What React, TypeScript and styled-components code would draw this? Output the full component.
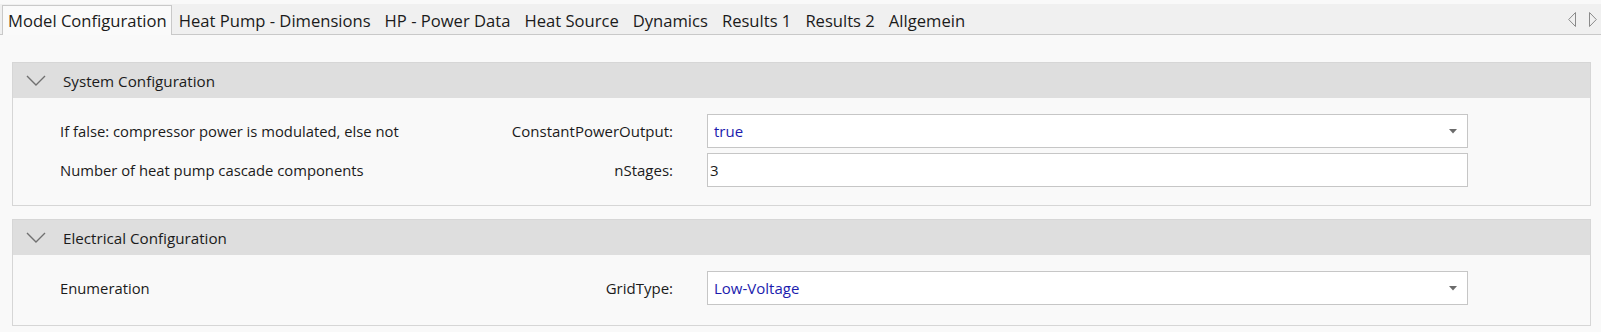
import React from "react";
import styled, { createGlobalStyle } from "styled-components";

const Global = createGlobalStyle`
  html, body { margin: 0; padding: 0; background: #f9f9f9; }
  body { font-family: "Open Sans", "Noto Sans", "Liberation Sans", sans-serif; color: #1b1b1b; }
  * { box-sizing: border-box; }
`;

const Page = styled.div`
  width: 1601px;
  height: 332px;
  padding-top: 4px;
  background: #f9f9f9;
  overflow: hidden;
`;

const TabStrip = styled.div`
  height: 31px;
  background: #f0f0f0;
  border-bottom: 1px solid #c9c9c9;
  display: flex;
  align-items: flex-end;
  padding-left: 2px;
`;

const Tab = styled.div<{ $active?: boolean }>`
  height: ${(p) => (p.$active ? "30px" : "29px")};
  margin-bottom: ${(p) => (p.$active ? "-1px" : "0")};
  padding: 0 ${(p) => (p.$active ? "4px 0 5px" : "6px")};
  display: flex;
  align-items: center;
  font-size: 16.6px;
  white-space: nowrap;
  color: #1b1b1b;
  background: ${(p) => (p.$active ? "#fafafa" : "transparent")};
  border: 1px solid ${(p) => (p.$active ? "#c9c9c9" : "transparent")};
  border-bottom: none;
`;

const Spacer = styled.div`
  flex: 1;
`;

const ScrollArrows = styled.div`
  display: flex;
  align-items: center;
  gap: 13px;
  height: 30px;
  padding-right: 4px;
  align-self: center;
`;

const Content = styled.div`
  padding: 27px 10px 0 12px;
  display: flex;
  flex-direction: column;
  gap: 13px;
`;

const Panel = styled.section`
  border: 1px solid #d6d6d6;
  background: #f9f9f9;
`;

const PanelHeader = styled.div`
  height: 35px;
  background: #dedede;
  display: flex;
  align-items: center;
  padding-left: 13px;
  gap: 17px;
  font-size: 15.2px;
  color: #1b1b1b;
`;

const PanelBody = styled.div<{ $top: number; $bottom: number }>`
  padding: ${(p) => p.$top}px 0 ${(p) => p.$bottom}px 47px;
  display: flex;
  flex-direction: column;
  gap: 5px;
`;

const Row = styled.div`
  display: grid;
  grid-template-columns: 420px 227px 761px;
  align-items: center;
  height: 34px;
  font-size: 15px;
`;

const Description = styled.div`
  white-space: nowrap;
  font-size: 14.8px;
`;

const Name = styled.div`
  text-align: right;
  padding-right: 34px;
  white-space: nowrap;
`;

const Field = styled.div<{ $blue?: boolean }>`
  height: 34px;
  background: #ffffff;
  border: 1px solid #c6c6c6;
  display: flex;
  align-items: center;
  padding: 0 10px 0 ${(p) => (p.$blue ? "6px" : "2px")};
  color: ${(p) => (p.$blue ? "#1c1cae" : "#1b1b1b")};
  font-size: 15px;
`;

const FieldText = styled.span`
  flex: 1;
`;

const Chevron = () => (
  <svg width="20" height="11" viewBox="0 0 20 11">
    <polyline points="1,1 10,10 19,1" fill="none" stroke="#707070" strokeWidth="1.4" />
  </svg>
);

const DropArrow = () => (
  <svg width="8" height="5" viewBox="0 0 8 5">
    <polygon points="0,0 8,0 4,4.5" fill="#6b6b6b" />
  </svg>
);

const TriLeft = () => (
  <svg width="8" height="15" viewBox="0 0 8 15">
    <polygon points="7.5,0.5 7.5,14.5 0.7,7.5" fill="none" stroke="#8a8a8a" strokeWidth="1" />
  </svg>
);

const TriRight = () => (
  <svg width="8" height="15" viewBox="0 0 8 15">
    <polygon points="0.5,0.5 0.5,14.5 7.3,7.5" fill="none" stroke="#8a8a8a" strokeWidth="1" />
  </svg>
);

type Param = { desc: string; name: string; value: string; combo?: boolean };

const sections: { title: string; top: number; bottom: number; params: Param[] }[] = [
  {
    title: "System Configuration",
    top: 16,
    bottom: 18,
    params: [
      { desc: "If false: compressor power is modulated, else not", name: "ConstantPowerOutput:", value: "true", combo: true },
      { desc: "Number of heat pump cascade components", name: "nStages:", value: "3" },
    ],
  },
  {
    title: "Electrical Configuration",
    top: 16,
    bottom: 20,
    params: [{ desc: "Enumeration", name: "GridType:", value: "Low-Voltage", combo: true }],
  },
];

const tabs = [
  "Model Configuration",
  "Heat Pump - Dimensions",
  "HP - Power Data",
  "Heat Source",
  "Dynamics",
  "Results 1",
  "Results 2",
  "Allgemein",
];

export default function App() {
  return (
    <Page>
      <Global />
      <TabStrip>
        {tabs.map((t, i) => (
          <Tab key={t} $active={i === 0}>
            {t}
          </Tab>
        ))}
        <Spacer />
        <ScrollArrows>
          <TriLeft />
          <TriRight />
        </ScrollArrows>
      </TabStrip>
      <Content>
        {sections.map((s) => (
          <Panel key={s.title}>
            <PanelHeader>
              <Chevron />
              <span>{s.title}</span>
            </PanelHeader>
            <PanelBody $top={s.top} $bottom={s.bottom}>
              {s.params.map((p) => (
                <Row key={p.name}>
                  <Description>{p.desc}</Description>
                  <Name>{p.name}</Name>
                  <Field $blue={p.combo}>
                    <FieldText>{p.value}</FieldText>
                    {p.combo && <DropArrow />}
                  </Field>
                </Row>
              ))}
            </PanelBody>
          </Panel>
        ))}
      </Content>
    </Page>
  );
}
